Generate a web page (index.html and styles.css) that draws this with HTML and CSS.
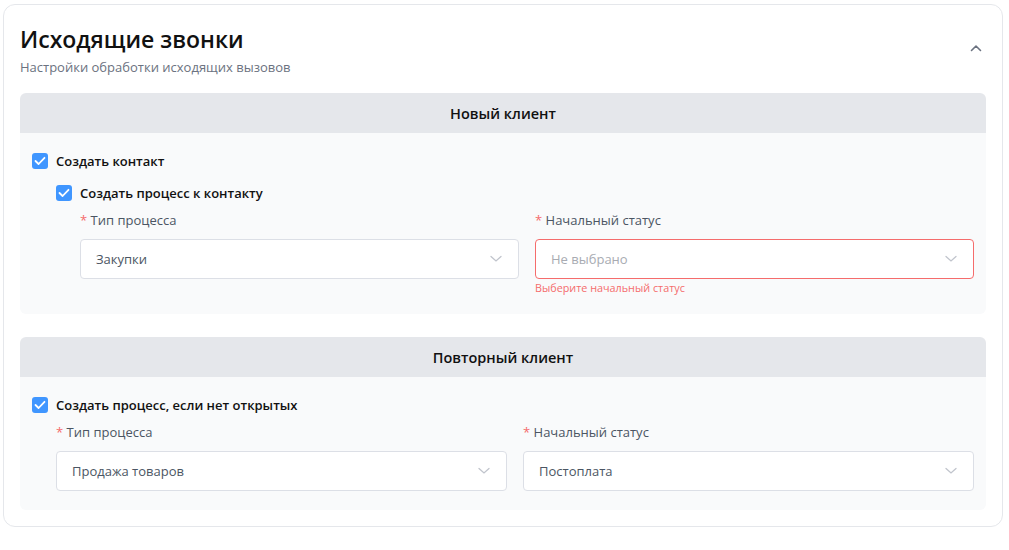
FILE: index.html
```html
<!DOCTYPE html>
<html lang="ru">
<head>
<meta charset="utf-8">
<link rel="stylesheet" href="styles.css">
</head>
<body>
<div class="card">
  <div class="card-head">
    <div>
      <h1 class="title">Исходящие звонки</h1>
      <div class="subtitle">Настройки обработки исходящих вызовов</div>
    </div>
    <svg class="collapse" width="12" height="8" viewBox="0 0 12 8"><path d="M1.5 6.5 L6 2 L10.5 6.5" fill="none" stroke="#6b7280" stroke-width="1.6" stroke-linecap="round" stroke-linejoin="round"/></svg>
  </div>

  <section class="block">
    <div class="block-head">Новый клиент</div>
    <div class="block-body">
      <label class="check">
        <span class="box"><svg width="12" height="10" viewBox="0 0 12 10"><path d="M1.5 5 L4.6 8 L10.5 1.8" fill="none" stroke="#fff" stroke-width="1.8" stroke-linecap="round" stroke-linejoin="round"/></svg></span>
        Создать контакт
      </label>
      <div class="indent">
        <label class="check check-2">
          <span class="box"><svg width="12" height="10" viewBox="0 0 12 10"><path d="M1.5 5 L4.6 8 L10.5 1.8" fill="none" stroke="#fff" stroke-width="1.8" stroke-linecap="round" stroke-linejoin="round"/></svg></span>
          Создать процесс к контакту
        </label>
        <div class="fields indent">
          <div class="field">
            <div class="label"><span class="req">*</span> Тип процесса</div>
            <div class="select"><span class="value">Закупки</span><svg class="arrow" width="12" height="8" viewBox="0 0 12 8"><path d="M1 1.5 L6 6 L11 1.5" fill="none" stroke="#c0c4cc" stroke-width="1.3" stroke-linecap="round"/></svg></div>
          </div>
          <div class="field">
            <div class="label"><span class="req">*</span> Начальный статус</div>
            <div class="select error"><span class="value placeholder">Не выбрано</span><svg class="arrow" width="12" height="8" viewBox="0 0 12 8"><path d="M1 1.5 L6 6 L11 1.5" fill="none" stroke="#c0c4cc" stroke-width="1.3" stroke-linecap="round"/></svg></div>
            <div class="err-text">Выберите начальный статус</div>
          </div>
        </div>
      </div>
    </div>
  </section>

  <section class="block block-2">
    <div class="block-head">Повторный клиент</div>
    <div class="block-body body-2">
      <label class="check">
        <span class="box"><svg width="12" height="10" viewBox="0 0 12 10"><path d="M1.5 5 L4.6 8 L10.5 1.8" fill="none" stroke="#fff" stroke-width="1.8" stroke-linecap="round" stroke-linejoin="round"/></svg></span>
        Создать процесс, если нет открытых
      </label>
      <div class="fields indent">
        <div class="field">
          <div class="label"><span class="req">*</span> Тип процесса</div>
          <div class="select"><span class="value">Продажа товаров</span><svg class="arrow" width="12" height="8" viewBox="0 0 12 8"><path d="M1 1.5 L6 6 L11 1.5" fill="none" stroke="#c0c4cc" stroke-width="1.3" stroke-linecap="round"/></svg></div>
        </div>
        <div class="field">
          <div class="label"><span class="req">*</span> Начальный статус</div>
          <div class="select"><span class="value">Постоплата</span><svg class="arrow" width="12" height="8" viewBox="0 0 12 8"><path d="M1 1.5 L6 6 L11 1.5" fill="none" stroke="#c0c4cc" stroke-width="1.3" stroke-linecap="round"/></svg></div>
        </div>
      </div>
    </div>
  </section>
</div>
</body>
</html>
```

FILE: styles.css
```css
* { box-sizing: border-box; }
html, body { background: #fff; }
body {
  margin: 4px 6px 0 3px;
  font-family: "Open Sans", "Noto Sans", "Liberation Sans", sans-serif;
  color: #111827;
}
.card {
  width: 1000px;
  border: 1px solid #e5e7eb;
  border-radius: 12px;
  padding: 18px 16px 16px 16px;
  background: #fff;
}
.card-head {
  display: flex;
  justify-content: space-between;
  align-items: center;
  margin-bottom: 16px;
}
.title {
  margin: 0;
  font-size: 23px;
  line-height: 32px;
  font-weight: 600;
  color: #111;
}
.subtitle {
  font-size: 13px;
  line-height: 20px;
  color: #6b7280;
  margin-top: 2px;
}
.collapse { margin-right: 4px; margin-top: -4px; }
.block-head {
  background: #e5e7eb;
  border-radius: 6px 6px 0 0;
  height: 40px;
  display: flex;
  align-items: center;
  justify-content: center;
  font-size: 14.5px;
  font-weight: 600;
  color: #111;
}
.block-body {
  background: #f9fafb;
  border-radius: 0 0 6px 6px;
  padding: 16px 12px 17px 12px;
}
.body-2 { padding-bottom: 19px; }
.block-2 { margin-top: 23px; }
.check {
  display: flex;
  align-items: center;
  height: 24px;
  font-size: 13px;
  font-weight: 600;
  color: #111;
}
.box {
  width: 16px;
  height: 16px;
  border-radius: 3px;
  background: #4096ff;
  display: flex;
  align-items: center;
  justify-content: center;
  margin-right: 8px;
  flex: none;
}
.indent { padding-left: 24px; }
.check-2 { margin-top: 8px; }
.fields {
  display: grid;
  grid-template-columns: 1fr 1fr;
  column-gap: 16px;
  margin-top: 4px;
}
.label {
  font-size: 13px;
  line-height: 22px;
  color: #4b5563;
  margin-bottom: 8px;
}
.req { color: #f56c6c; }
.select {
  height: 40px;
  background: #fff;
  border: 1px solid #dcdfe6;
  border-radius: 4px;
  display: flex;
  align-items: center;
  justify-content: space-between;
  padding: 0 16px 0 15px;
}
.select.error { border-color: #f56c6c; }
.value { font-size: 13px; color: #4b5563; }
.placeholder { color: #a8abb2; }
.err-text {
  font-size: 10.8px;
  line-height: 18px;
  color: #f56c6c;
}
```
